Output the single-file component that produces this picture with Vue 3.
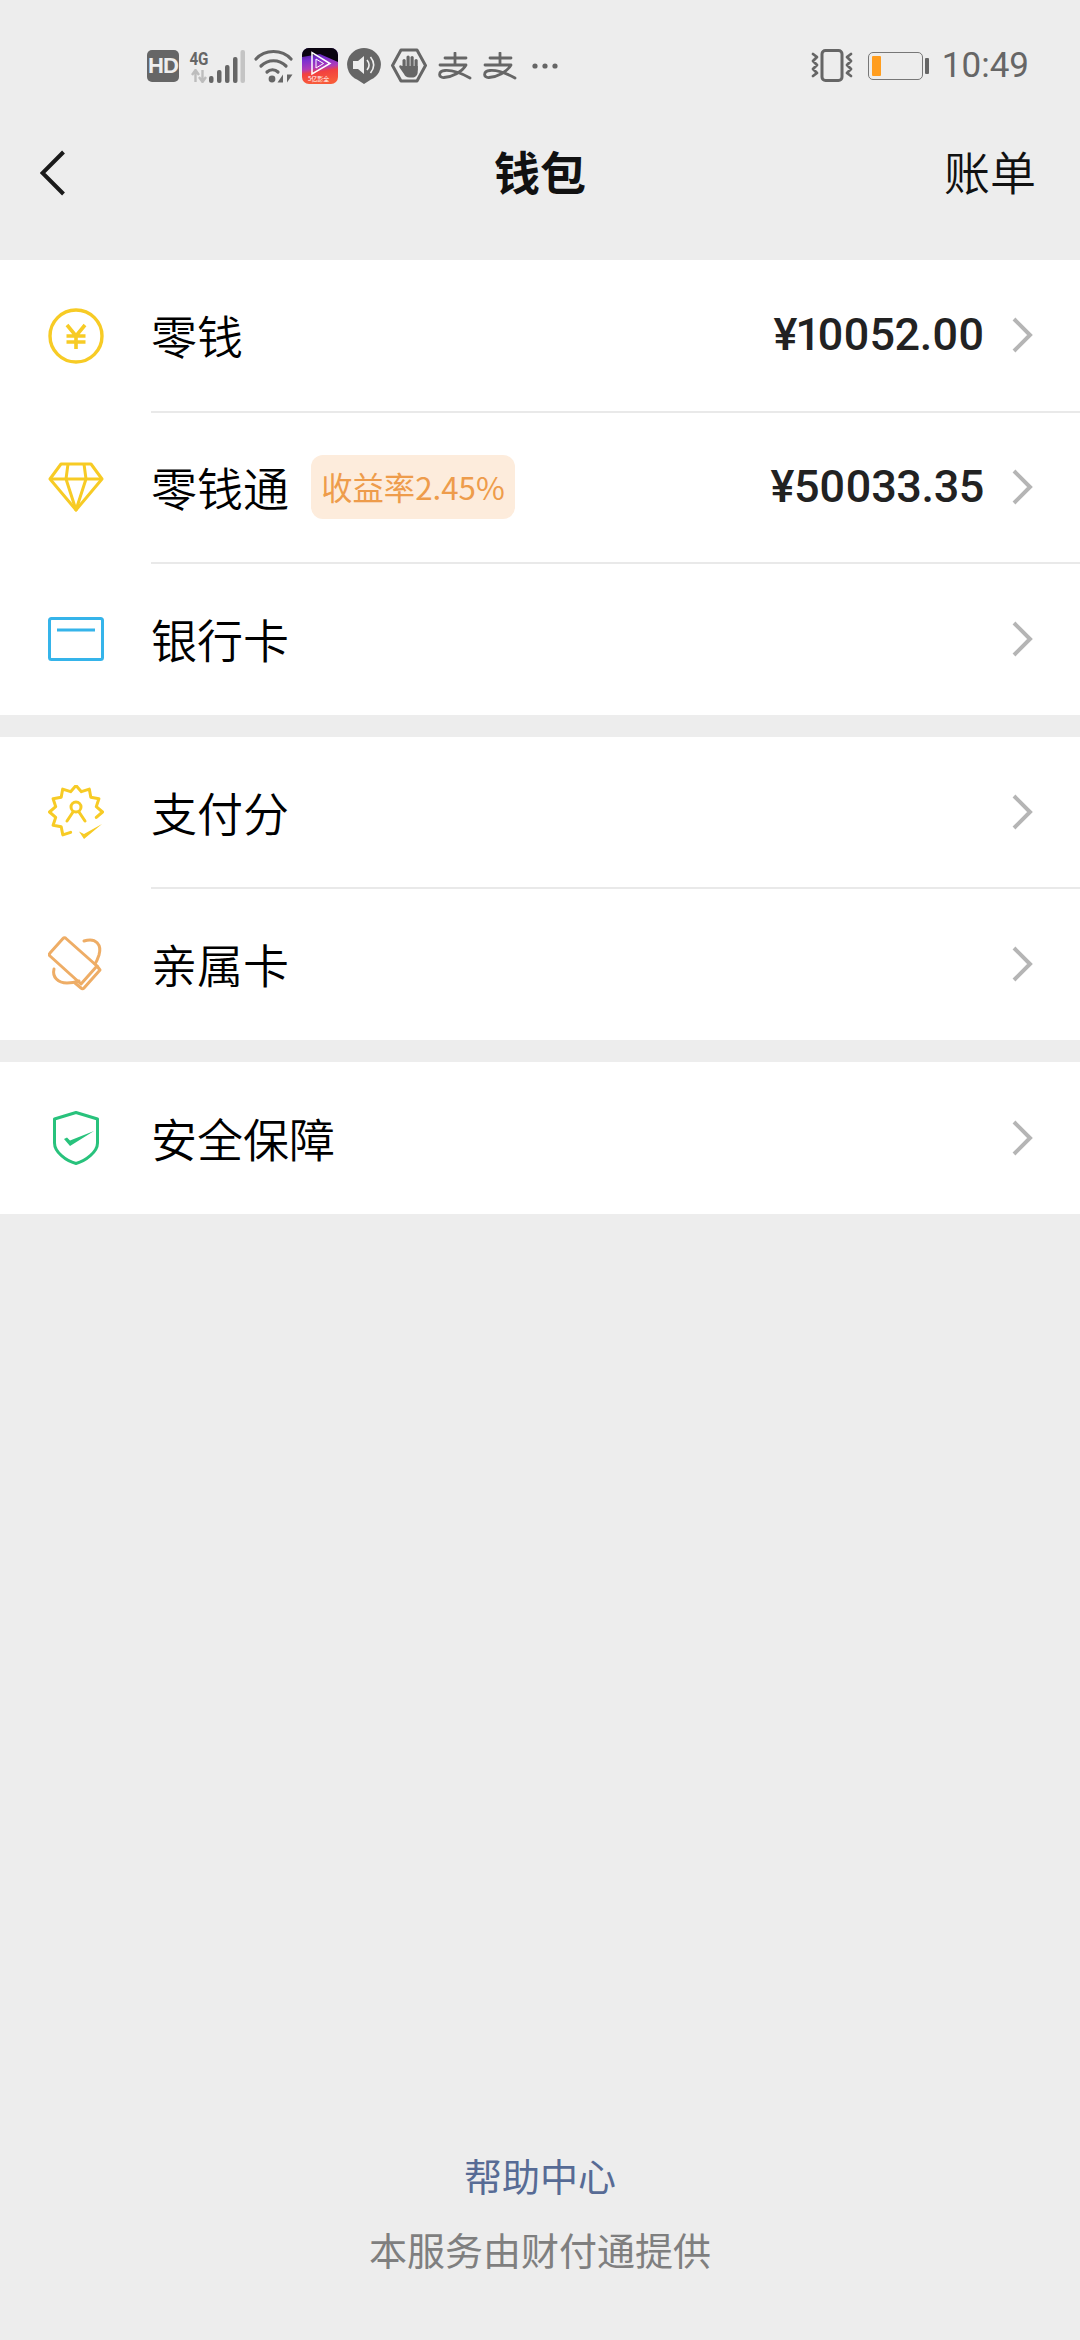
<script setup>
const sections = [
  [
    { label: '零钱', icon: 'coin', amount: '¥10052.00' },
    { label: '零钱通', icon: 'gem', amount: '¥50033.35', tag: '收益率2.45%' },
    { label: '银行卡', icon: 'card' },
  ],
  [
    { label: '支付分', icon: 'score' },
    { label: '亲属卡', icon: 'family' },
  ],
  [{ label: '安全保障', icon: 'shield' }],
]

// Scalloped 12-point badge outline, open at the lower right for the tick.
const badge = (() => {
  const pts = []
  for (let i = 0; i <= 18; i++) {
    const a = ((105 + i * 15) * Math.PI) / 180
    const r = i % 2 ? 26.5 : 21
    pts.push(`${(28 + r * Math.cos(a)).toFixed(1)} ${(27 + r * Math.sin(a)).toFixed(1)}`)
  }
  return 'M' + pts.join('L')
})()
</script>

<template>
  <div class="page">
    <div class="status">
      <div class="status-left">
        <span class="hd">HD</span>
        <div class="signal">
          <div class="net"><span class="g4">4G</span>
            <svg width="16" height="14" viewBox="0 0 16 14"><path d="M4.500 13V2M1 6l3.500-5L8 6M11.500 1v11M8 8l3.500 5L15 8" fill="none" stroke="#bdbdbd" stroke-width="2.400"/></svg>
          </div>
          <svg width="36" height="33" viewBox="0 0 36 33"><g fill="#666"><rect x="0" y="26" width="4.500" height="7" rx="2"/><rect x="8" y="20" width="4.500" height="13" rx="2"/><rect x="16" y="15" width="4.500" height="18" rx="2"/><rect x="24" y="7" width="4.500" height="26" rx="2"/></g><rect x="31.500" y="0" width="4.500" height="33" rx="2" fill="#c4c4c4"/></svg>
        </div>
        <svg class="wifi" width="39" height="34" viewBox="0 0 39 34"><g fill="none" stroke="#666" stroke-width="3.200" stroke-linecap="round"><path d="M2 10C11 0 28 0 37 10"/><path d="M7 17C14 10 25 10 32 17"/></g><path d="M13 23C16 20 21 20 24 23" fill="none" stroke="#666" stroke-width="3.200" stroke-linecap="round"/><circle cx="18" cy="30" r="3.400" fill="#666"/><path d="M29 33.500v-8l-5.500 8zM33 25.500v8l5.500-8z" fill="#666"/></svg>
        <div class="app">
          <svg width="36" height="36" viewBox="0 0 36 36"><defs><linearGradient id="ag" x1="0" y1="0" x2="0.15" y2="1"><stop offset=".1" stop-color="#3b1a7c"/><stop offset=".35" stop-color="#7a2fd0"/><stop offset=".6" stop-color="#b03bb8"/><stop offset=".72" stop-color="#f2403f"/><stop offset="1" stop-color="#f85a3a"/></linearGradient></defs><rect width="36" height="36" rx="7" fill="url(#ag)"/><path d="M7 0h22a7 7 0 0 1 7 7v7L18 6 0 9V7a7 7 0 0 1 7-7z" fill="#0a0410"/><path d="M10 4.500V26l18-10.500z" fill="none" stroke="#fff" stroke-width="1.500"/><path d="M14 11v9l7.500-4.500z" fill="none" stroke="#fff" stroke-width="1"/></svg>
          <span class="app-t">5亿影全</span>
        </div>
        <svg class="speaker" width="34" height="36" viewBox="0 0 34 36"><path d="M17 0a17 16.500 0 0 1 7 31.500L17 36l-7-4.500A17 16.500 0 0 1 17 0z" fill="#666"/><path d="M6 13h5l6-5v18l-6-5H6z" fill="#eee"/><path d="M20 12c2.500 3 2.500 7 0 10M23.500 9c4 5 4 11 0 16" fill="none" stroke="#eee" stroke-width="1.600"/></svg>
        <svg class="hand" width="36" height="35" viewBox="0 0 36 35"><path d="M10 2h16l8.500 15.500L26 33H10L1.500 17.500z" fill="none" stroke="#666" stroke-width="3" stroke-linejoin="round"/><g fill="#666"><rect x="11.500" y="11" width="3.200" height="12" rx="1.600"/><rect x="15.500" y="7.500" width="3.200" height="14" rx="1.600"/><rect x="19.500" y="8" width="3.200" height="14" rx="1.600"/><rect x="23.500" y="11" width="3.200" height="12" rx="1.600"/><path d="M11.500 18h15.200v6c0 3.500-2.500 5.500-5.500 5.500h-2.700c-3 0-4.500-1.500-5.500-3.500l-4.500-6.500c-1-2 1-3 2.500-1.500z"/></g></svg>
        <svg class="ali" width="34" height="28" viewBox="0 0 34 28"><path d="M7 6h21M17 1v12M2 13h26C24 20 14 25 6 25.500 0 26 0 19 7 18.500 14 18 23 21 32 26" fill="none" stroke="#666" stroke-width="2.800" stroke-linecap="round" stroke-linejoin="round"/></svg>
        <svg class="ali" width="34" height="28" viewBox="0 0 34 28"><path d="M7 6h21M17 1v12M2 13h26C24 20 14 25 6 25.500 0 26 0 19 7 18.500 14 18 23 21 32 26" fill="none" stroke="#666" stroke-width="2.800" stroke-linecap="round" stroke-linejoin="round"/></svg>
        <svg class="more" width="26" height="6" viewBox="0 0 26 6"><g fill="#666"><circle cx="3" cy="3" r="2.600"/><circle cx="13" cy="3" r="2.600"/><circle cx="23" cy="3" r="2.600"/></g></svg>
      </div>
      <div class="status-right">
        <svg width="42" height="33" viewBox="0 0 42 33"><rect x="11" y="1.500" width="20" height="30" rx="3.500" fill="none" stroke="#666" stroke-width="3"/><path d="M2 5l4 3-4 4 4 4-4 4 4 4-4 3M40 5l-4 3 4 4-4 4 4 4-4 4 4 3" fill="none" stroke="#666" stroke-width="2.800" stroke-linejoin="round" stroke-linecap="round"/></svg>
        <div class="battery">
          <div class="batt-body"><div class="batt-fill"></div></div>
          <div class="batt-tip"></div>
        </div>
        <span class="time">10:49</span>
      </div>
    </div>

    <div class="nav">
      <svg class="back" width="26" height="46" viewBox="0 0 26 46"><path d="M23.500 2L2.500 23l21 21" fill="none" stroke="#1a1a1a" stroke-width="4"/></svg>
      <span class="title">钱包</span>
      <span class="bill">账单</span>
    </div>

    <div class="sections">
      <section v-for="(sec, i) in sections" :key="i" class="sec">
        <div v-for="(row, j) in sec" :key="row.label" class="row">
          <div class="ico">
            <svg v-if="row.icon === 'coin'" width="56" height="56" viewBox="0 0 56 56"><circle cx="28" cy="28" r="26" fill="none" stroke="#f7cb25" stroke-width="3.400"/><path d="M19 17l9 11 9-11M18.500 28h19M18.500 34h19M28 28v13" fill="none" stroke="#f7cb25" stroke-width="3.600"/></svg>
            <svg v-else-if="row.icon === 'gem'" width="56" height="50" viewBox="0 0 56 50"><g fill="none" stroke="#f7cb25" stroke-width="3" stroke-linejoin="round"><path d="M13 2h30l11 15-26 31L2 17z"/><path d="M2 17h52M18 17l10 31 10-31M20 2l-2 15M36 2l2 15"/></g></svg>
            <svg v-else-if="row.icon === 'card'" width="56" height="44" viewBox="0 0 56 44"><rect x="1.500" y="1.500" width="53" height="41" rx="2" fill="none" stroke="#35b4ea" stroke-width="3"/><path d="M9 13h38" stroke="#35b4ea" stroke-width="3"/></svg>
            <svg v-else-if="row.icon === 'score'" width="56" height="56" viewBox="0 0 56 56"><g fill="none" stroke="#f7cb25" stroke-width="3" stroke-linejoin="round" stroke-linecap="round"><path :d="badge"/><circle cx="28" cy="22" r="5"/><path d="M25 27l-6 9M31 27l6 9"/></g><path d="M31 46.500l5 2.500 18-10-18 15z" fill="#f7cb25"/></svg>
            <svg v-else-if="row.icon === 'family'" width="56" height="56" viewBox="0 0 56 56"><g fill="none" stroke="#eead66" stroke-width="3" stroke-linejoin="round" stroke-linecap="round"><path d="M18 2.500L49 30 33 48 2 20a2 2 0 0 1 0-3L15 2.500a2 2 0 0 1 3 0z"/><path d="M49 30l3 4-16 18a2 2 0 0 1-3 0l-6-5"/><path d="M36 5c12-4 18 4 15 14-1 3-2 6-4 9M6 33c-2 8 4 14 13 14 5 0 9-1 12-2"/></g></svg>
            <svg v-else width="46" height="54" viewBox="0 0 46 54"><path d="M23 1.500L44.500 8v24c0 9-12 18-21.500 20.500C13 50 1.500 41 1.500 32V8z" fill="none" stroke="#28c27c" stroke-width="3" stroke-linejoin="round"/><path d="M11 28l3-1.500 3 3L41 20 17 35z" fill="#28c27c"/></svg>
          </div>
          <div class="body" :class="{ line: j < sec.length - 1 }">
            <span class="label">{{ row.label }}</span>
            <span v-if="row.tag" class="tag">{{ row.tag }}</span>
            <span class="spacer"></span>
            <span v-if="row.amount" class="amount">{{ row.amount }}</span>
            <svg class="chev" width="22" height="36" viewBox="0 0 22 36"><path d="M2 2l16 16L2 34" fill="none" stroke="#b5b5b5" stroke-width="4"/></svg>
          </div>
        </div>
      </section>
    </div>

    <div class="foot">
      <span class="help">帮助中心</span>
      <span class="by">本服务由财付通提供</span>
    </div>
  </div>
</template>

<style>
html, body { margin: 0; background: #ededed; }
</style>

<style scoped>
.page {
  width: 1080px;
  height: 2340px;
  display: flex;
  flex-direction: column;
  background: #ededed;
  font-family: "Noto Sans CJK SC", "Noto Sans", sans-serif;
  color: #0c0c0c;
  overflow: hidden;
}
.status {
  height: 49px;
  padding: 41px 51px 0 147px;
  display: flex;
  align-items: center;
  justify-content: space-between;
  color: #666;
}
.status-left, .status-right { display: flex; align-items: center; }
.status-left svg, .status-right svg { display: block; flex: none; }
.hd {
  width: 32px;
  height: 32px;
  border-radius: 5px;
  background: #666;
  color: #eee;
  font: 700 22px/32px "Liberation Sans", sans-serif;
  text-align: center;
  letter-spacing: -1px;
}
.signal { display: flex; align-items: flex-end; margin-left: 11px; }
.net { display: flex; flex-direction: column; align-items: center; width: 18px; margin-right: 1px; }
.g4 { font: 700 19px/20px "Roboto", sans-serif; color: #666; transform: scaleX(.8); }
.wifi { margin-left: 9px; }
.app { position: relative; width: 36px; height: 36px; margin-left: 9px; }
.app-t { position: absolute; left: 6px; bottom: 1px; font-size: 6px; line-height: 8px; color: #fff; white-space: nowrap; }
.speaker { margin-left: 9px; }
.hand { margin-left: 10px; }
.ali { margin-left: 11px; }
.more { margin-left: 15px; }
.battery { display: flex; align-items: center; margin-left: 15px; }
.batt-body {
  width: 55px;
  height: 28px;
  box-sizing: border-box;
  border: 1.500px solid #777;
  border-radius: 5px;
  padding: 3px;
}
.batt-fill { width: 9px; height: 100%; background: #ff9d1e; border-radius: 1px; }
.batt-tip { width: 4px; height: 16px; margin-left: 2px; background: #666; border-radius: 1px; }
.time {
  margin-left: 13px;
  font: 400 35px/40px "Roboto", sans-serif;
  color: #666;
}
.nav {
  height: 170px;
  box-sizing: border-box;
  display: flex;
  align-items: center;
  justify-content: space-between;
  padding: 0 44px 11px 40px;
  position: relative;
}
.back { display: block; margin-top: 6px; }
.title {
  position: absolute;
  left: 0;
  right: 0;
  text-align: center;
  font-size: 46px;
  font-weight: 700;
  line-height: 60px;
  color: #111;
}
.bill { font-size: 46px; line-height: 60px; color: #111; font-weight: 350; }
.sections { display: flex; flex-direction: column; gap: 22px; }
.sec { background: #fff; }
.row { display: flex; height: 151.600px; }
.ico { width: 151px; flex: none; display: flex; align-items: center; justify-content: center; box-sizing: border-box; }
.ico svg { display: block; }
.body { flex: 1; display: flex; align-items: center; padding-right: 46px; box-sizing: border-box; }
.line { border-bottom: 2px solid #e9e9e9; margin-bottom: -1px; }
.label { font-size: 46px; line-height: 60px; font-weight: 350; color: #000; margin-top: -2px; }
.tag {
  margin-left: 22px;
  height: 64px;
  width: 204px;
  background: #fdecdc;
  border-radius: 12px;
  color: #ee9c4b;
  font-size: 31.300px;
  line-height: 64px;
  text-align: center;
  white-space: nowrap;
}
.spacer { flex: 1; }
.amount {
  font: 500 45px/60px "Roboto", sans-serif;
  font-variant-numeric: proportional-nums;
  letter-spacing: -.4px;
  color: #222;
  margin-right: 28px;
}
.chev { display: block; }
.foot {
  margin-top: auto;
  padding-bottom: 68px;
  display: flex;
  flex-direction: column;
  align-items: center;
  gap: 28px;
}
.help { font-size: 38px; line-height: 46px; color: #576b95; }
.by { font-size: 38px; line-height: 46px; color: #7f7f7f; }
</style>
